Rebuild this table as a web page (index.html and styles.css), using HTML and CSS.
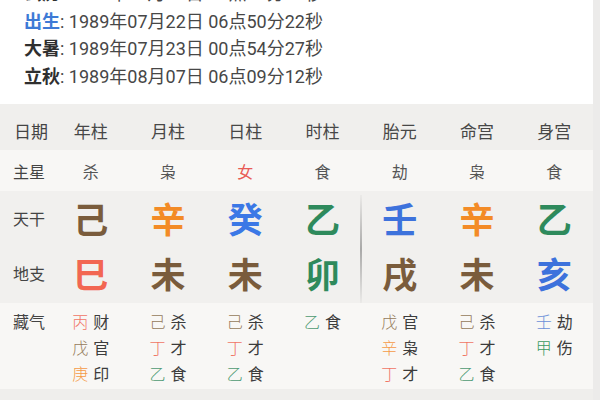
FILE: index.html
```html
<!DOCTYPE html>
<html lang="zh">
<head>
<meta charset="utf-8">
<link rel="stylesheet" href="styles.css">
</head>
<body>
<div class="page">
  <section class="info">
    <div class="line"><b class="k dark">公历</b>: 1989年07月22日 06点50分22秒</div>
    <div class="line"><b class="k blue">出生</b>: 1989年07月22日 06点50分22秒</div>
    <div class="line"><b class="k dark">大暑</b>: 1989年07月23日 00点54分27秒</div>
    <div class="line"><b class="k dark">立秋</b>: 1989年08月07日 06点09分12秒</div>
  </section>

  <section class="table">
    <div class="row head">
      <div class="lab">日期</div>
      <div class="c">年柱</div><div class="c">月柱</div><div class="c">日柱</div><div class="c">时柱</div>
      <div class="c">胎元</div><div class="c">命宫</div><div class="c">身宫</div>
    </div>
    <div class="row star">
      <div class="lab">主星</div>
      <div class="c">杀</div><div class="c">枭</div><div class="c red">女</div><div class="c">食</div>
      <div class="c">劫</div><div class="c">枭</div><div class="c">食</div>
    </div>
    <div class="pillars">
      <div class="row big">
        <div class="lab">天干</div>
        <div class="c g brown">己</div><div class="c g orange">辛</div><div class="c g blue">癸</div><div class="c g green">乙</div>
        <div class="c g blue2">壬</div><div class="c g orange">辛</div><div class="c g green">乙</div>
      </div>
      <div class="row big low">
        <div class="lab">地支</div>
        <div class="c g red2">巳</div><div class="c g brown">未</div><div class="c g brown">未</div><div class="c g green">卯</div>
        <div class="c g brown">戌</div><div class="c g brown">未</div><div class="c g blue2">亥</div>
      </div>
    </div>
    <div class="row hidden">
      <div class="lab">藏气</div>
      <div class="c"><ul class="hs"><li><i class="s-red">丙</i>财</li><li><i class="s-brown">戊</i>官</li><li><i class="s-orange">庚</i>印</li></ul></div>
      <div class="c"><ul class="hs"><li><i class="s-brown">己</i>杀</li><li><i class="s-red">丁</i>才</li><li><i class="s-green">乙</i>食</li></ul></div>
      <div class="c"><ul class="hs"><li><i class="s-brown">己</i>杀</li><li><i class="s-red">丁</i>才</li><li><i class="s-green">乙</i>食</li></ul></div>
      <div class="c"><ul class="hs"><li><i class="s-green">乙</i>食</li></ul></div>
      <div class="c"><ul class="hs"><li><i class="s-brown">戊</i>官</li><li><i class="s-orange">辛</i>枭</li><li><i class="s-red">丁</i>才</li></ul></div>
      <div class="c"><ul class="hs"><li><i class="s-brown">己</i>杀</li><li><i class="s-red">丁</i>才</li><li><i class="s-green">乙</i>食</li></ul></div>
      <div class="c"><ul class="hs"><li><i class="s-blue">壬</i>劫</li><li><i class="s-green2">甲</i>伤</li></ul></div>
    </div>
    <div class="row foot"></div>
  </section>
</div>
</body>
</html>
```
FILE: styles.css
```css
html, body {
  margin: 0;
  padding: 0;
  background: #ecebea;
  overflow: hidden;
}
body {
  width: 600px;
  height: 400px;
  font-family: Roboto, "Noto Sans CJK SC", sans-serif;
  color: #444;
}
.page {
  width: 593px;
  background: #fff;
}
.info {
  margin-top: -21px;
  padding: 0 0 15px 24px;
  background: #fff;
}
.line {
  font-size: 18px;
  height: 27.5px;
  line-height: 27.5px;
  color: #474747;
  white-space: nowrap;
}
.k {
  font-weight: 700;
  font-family: "Noto Sans CJK SC", sans-serif;
  font-size: 18px;
}
.k.blue { color: #3d7ad6; }
.k.dark { color: #2f2f2f; }

.table {
  font-family: "Noto Sans CJK SC", sans-serif;
}
.row {
  display: grid;
  grid-template-columns: 52px repeat(7, 1fr);
  align-items: center;
}
.lab {
  padding-left: 13px;
  font-size: 16px;
  color: #444;
  white-space: nowrap;
}
.c {
  text-align: center;
}
.head {
  background: #f0efed;
  height: 46px;
  padding-top: 6px;
  box-sizing: border-box;
  font-size: 17px;
  color: #474747;
}
.head .lab { font-size: 17px; padding-left: 14px; }
.star {
  background: #f8f7f5;
  height: 41px;
  font-size: 16px;
  color: #555;
}
.star .red { color: #e85b55; }
.pillars {
  position: relative;
  background: #f1f0ee;
}
.pillars::after {
  content: "";
  position: absolute;
  left: 360px;
  top: 4px;
  bottom: 0;
  width: 2px;
  background: linear-gradient(to bottom, rgba(120,120,120,0.05), rgba(110,110,110,0.55) 50%, rgba(120,120,120,0.05));
}
.big {
  height: 51px;
  padding-top: 2px;
  box-sizing: border-box;
}
.big.low { height: 61px; padding-top: 0; }
.g {
  font-size: 35px;
  font-weight: 700;
  line-height: 1;
}
.brown { color: #7a5c3c; }
.orange { color: #f38b26; }
.blue { color: #3b78e6; }
.blue2 { color: #3d72dc; }
.green { color: #2e8a5c; }
.red2 { color: #f26652; }

.hidden {
  background: #f8f7f5;
  height: 86px;
  align-items: start;
  padding-top: 5px;
  box-sizing: border-box;
}
.hidden .lab { line-height: 26px; }
.hs {
  list-style: none;
  margin: 0;
  padding: 0;
  display: inline-block;
  text-align: left;
}
.hs li {
  font-size: 16px;
  line-height: 26px;
  color: #3c3c3c;
  white-space: nowrap;
}
.hs i {
  font-style: normal;
  font-weight: 300;
  margin-right: 5px;
}
.s-red { color: #f07565; }
.s-brown { color: #957a5a; }
.s-orange { color: #f59a45; }
.s-green { color: #4e9a72; }
.s-green2 { color: #3a9a60; }
.s-blue { color: #6a8fd8; }
.foot {
  background: #efeeec;
  height: 20px;
}
```
